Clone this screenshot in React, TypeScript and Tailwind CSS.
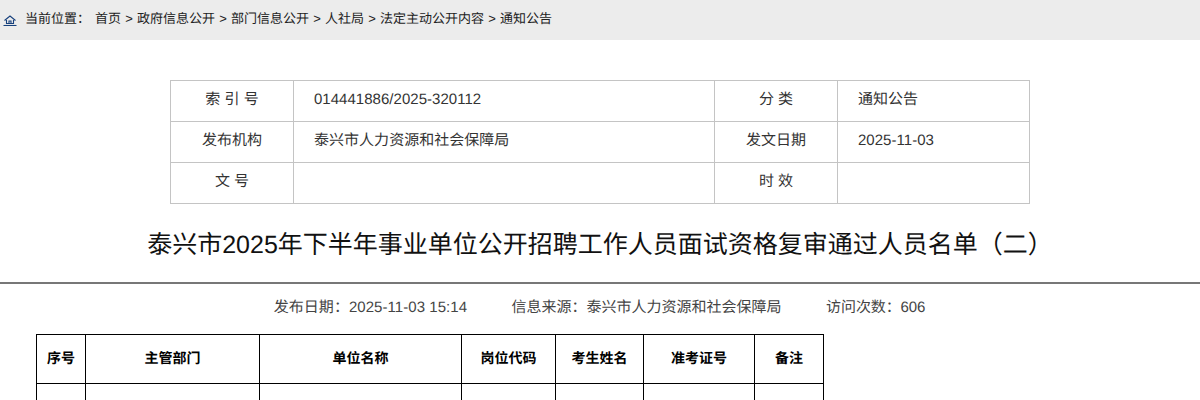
const FONT = "font-['Liberation_Sans','Noto_Sans_CJK_SC',sans-serif] [text-rendering:geometricPrecision]";

const crumbs = ["政府信息公开", "部门信息公开", "人社局", "法定主动公开内容", "通知公告"];

const metaRows = [
  ["索 引 号", "014441886/2025-320112", "分 类", "通知公告"],
  ["发布机构", "泰兴市人力资源和社会保障局", "发文日期", "2025-11-03"],
  ["文 号", "", "时 效", ""],
];

const headers = [
  { label: "序号", width: "w-[49px]" },
  { label: "主管部门", width: "w-[174px]" },
  { label: "单位名称", width: "w-[202px]" },
  { label: "岗位代码", width: "w-[94px]" },
  { label: "考生姓名", width: "w-[88px]" },
  { label: "准考证号", width: "w-[111px]" },
  { label: "备注", width: "w-[69px]" },
];

function HomeIcon() {
  return (
    <svg className="ml-[3px] mt-[4px] h-[11px] w-[14px] shrink-0" viewBox="0 0 14 11" fill="none" stroke="#17407c" strokeWidth="1.1">
      <path d="M1.5 5.5 7 1 12.5 5.5" />
      <path d="M3.5 5V8.5H10.5V5" />
      <path d="M6 8.5V6H8V8.5" />
      <path d="M0.5 10.5H13.5" />
    </svg>
  );
}

export default function App() {
  return (
    <div className={`${FONT} h-[400px] w-[1200px] overflow-hidden bg-white`}>
      <div className="flex h-10 items-center bg-[#ececec] pb-[3px] text-[13px] text-[#222]">
        <HomeIcon />
        <span className="ml-2">当前位置：</span>
        <span className="ml-[5px]">首页</span>
        {crumbs.map((crumb) => (
          <span key={crumb} className="flex">
            <span className="w-4 text-center">&gt;</span>
            {crumb}
          </span>
        ))}
      </div>

      <div className="px-[170px] pt-10">
        <table className="w-[860px] table-fixed border-collapse text-[15px] text-[#333]">
          <colgroup>
            <col className="w-[123px]" />
            <col className="w-[421px]" />
            <col className="w-[123px]" />
            <col />
          </colgroup>
          <tbody>
            {metaRows.map((row) => (
              <tr key={row[0]} className="h-[41px]">
                <td className="border border-[#c4c4c4] pb-[2px] text-center">{row[0]}</td>
                <td className="border border-[#c4c4c4] pb-[2px] pl-5 tracking-[0.03px]">{row[1]}</td>
                <td className="border border-[#c4c4c4] pb-[2px] text-center">{row[2]}</td>
                <td className="border border-[#c4c4c4] pb-[2px] pl-5 tracking-[0.03px]">{row[3]}</td>
              </tr>
            ))}
          </tbody>
        </table>
      </div>

      <h1 className="mt-[25px] text-center text-[25px] leading-[32px] font-normal text-[#111]">
        泰兴市2025年下半年事业单位公开招聘工作人员面试资格复审通过人员名单（二）
      </h1>

      <div className="mt-[21px] h-[2px] bg-[#777]" />

      <div className="mt-[14px] flex justify-center gap-[44.5px] pr-[1px] text-[15px] leading-5 text-[#444]">
        <span className="tracking-[0.05px]">发布日期：2025-11-03 15:14</span>
        <span>信息来源：泰兴市人力资源和社会保障局</span>
        <span className="tracking-[-0.1px]">访问次数：606</span>
      </div>

      <div className="pl-9 pt-4">
        <table className="table-fixed border-collapse text-sm font-bold text-black">
          <tbody>
            <tr className="h-[49px]">
              {headers.map((header) => (
                <td key={header.label} className={`${header.width} border border-black pb-[3px] text-center`}>
                  {header.label}
                </td>
              ))}
            </tr>
            <tr className="h-[49px]">
              {headers.map((header) => (
                <td key={header.label} className="border border-black" />
              ))}
            </tr>
          </tbody>
        </table>
      </div>
    </div>
  );
}
